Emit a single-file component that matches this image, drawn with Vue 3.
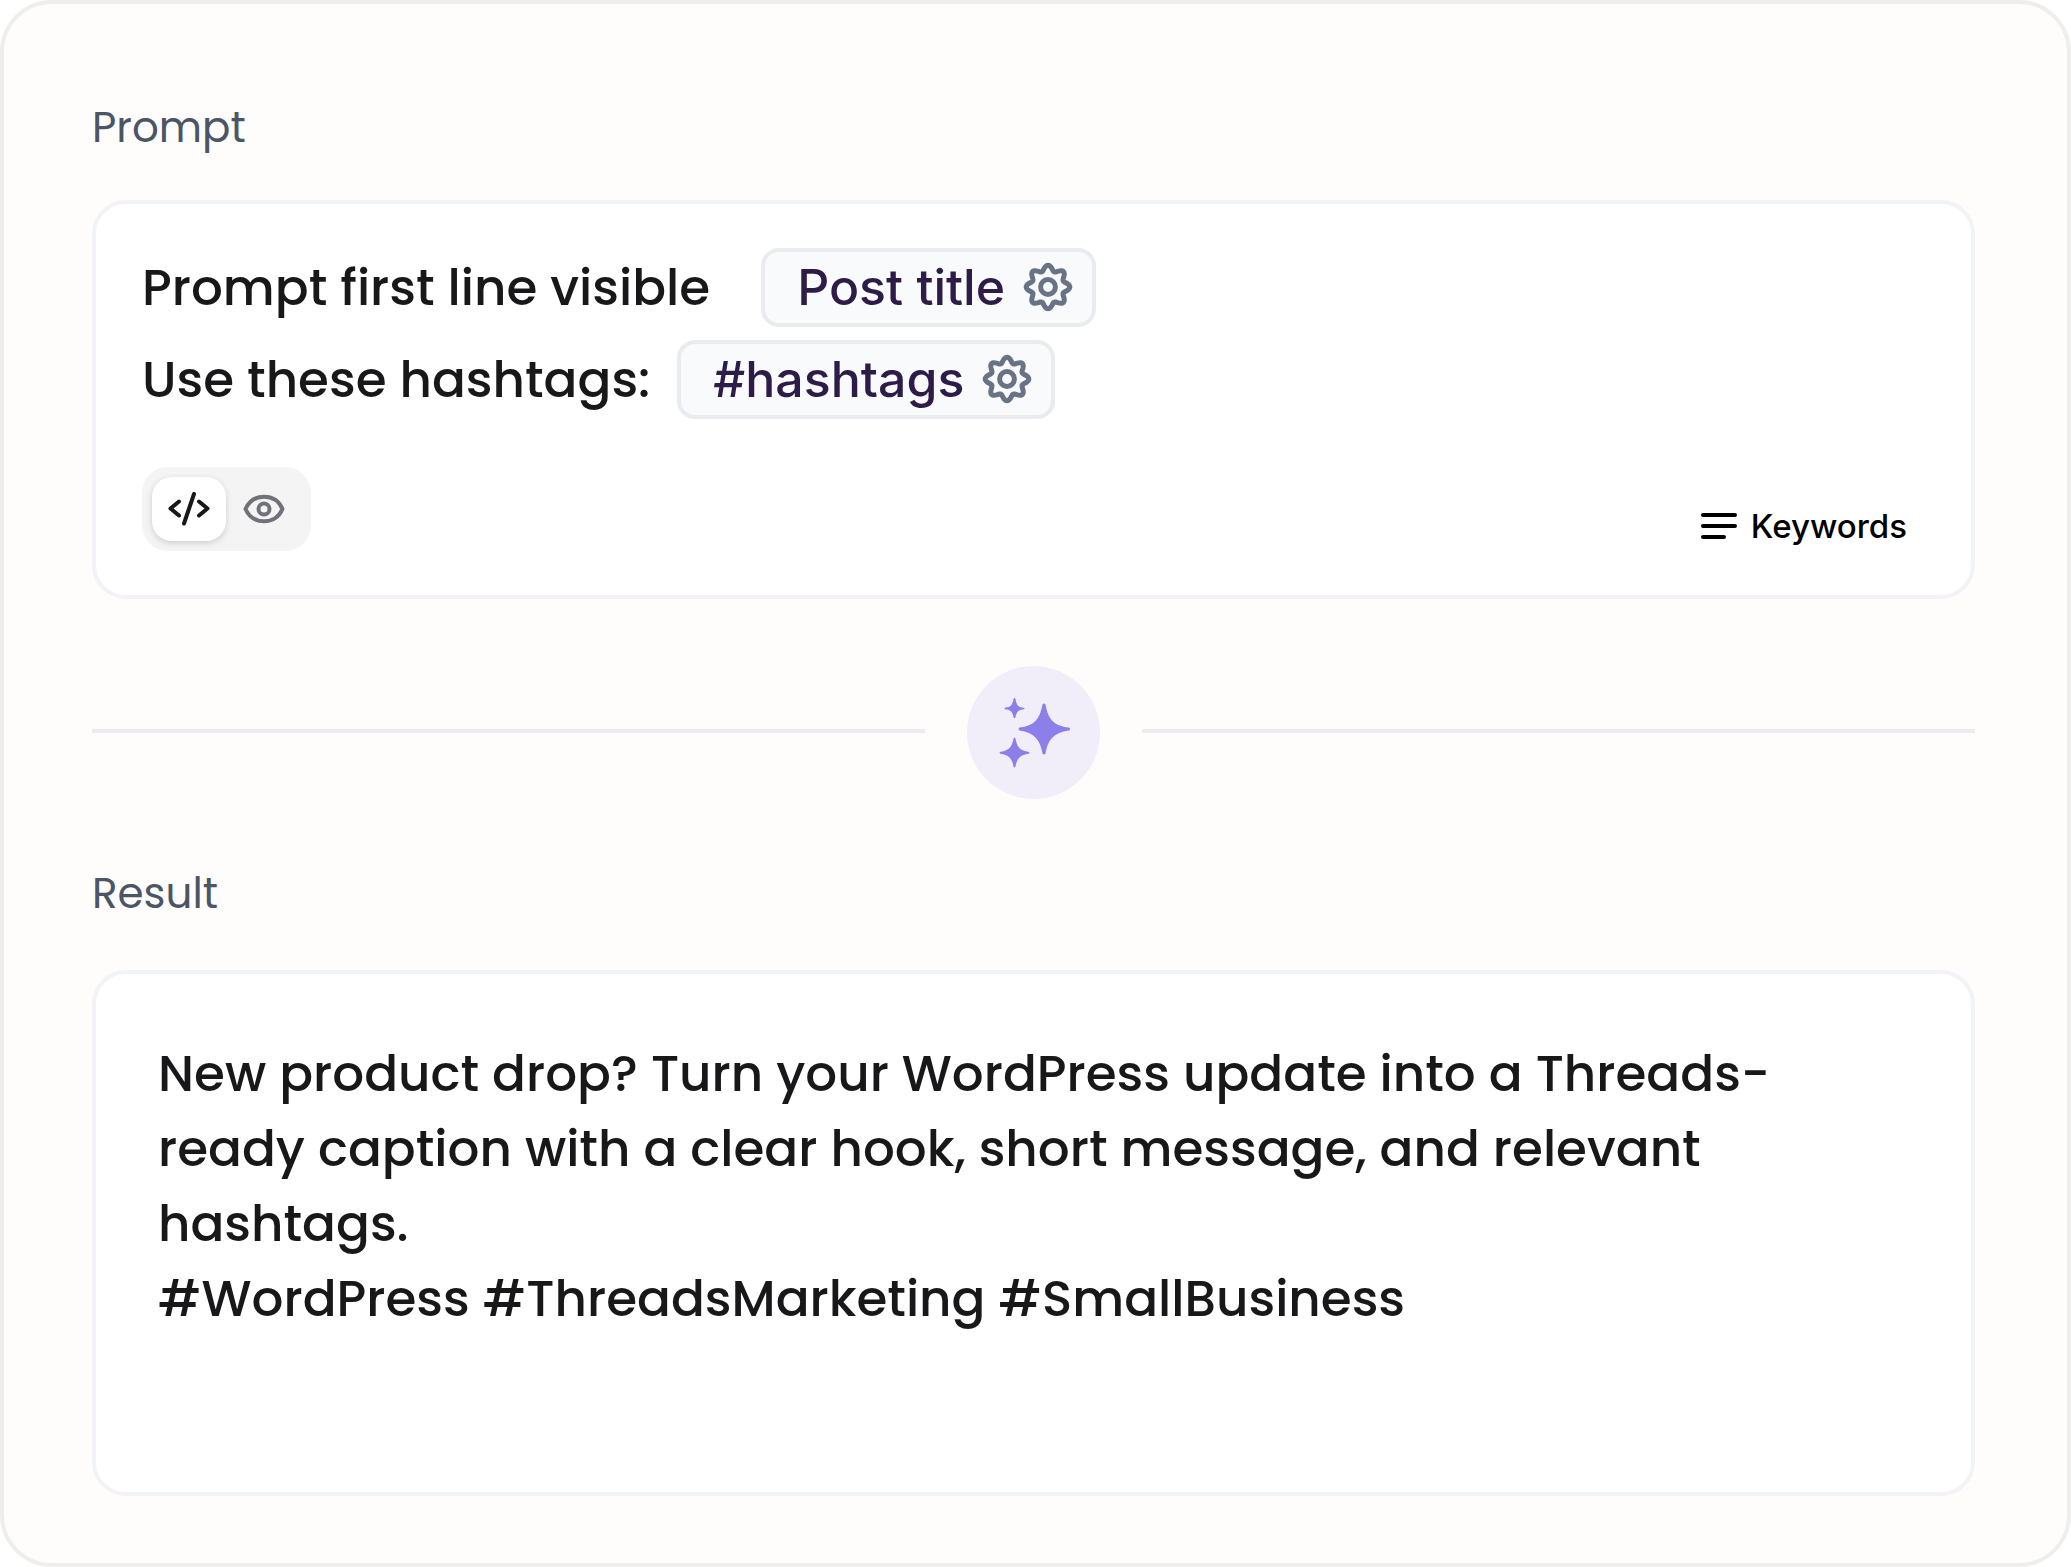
<script setup>
import { ref } from 'vue'

const mode = ref('code')

const rows = [
  { text: 'Prompt first line visible', chip: 'Post title', wide: true },
  { text: 'Use these hashtags:', chip: '#hashtags', wide: false },
]

const resultText =
  'New product drop? Turn your WordPress update into a Threads-ready caption with a clear hook, short message, and relevant hashtags.'
const resultTags = '#WordPress #ThreadsMarketing #SmallBusiness'

// Eight-lobed gear outline in a 50 x 50 box
const gearPath = (() => {
  const steps = 160
  const points = []
  for (let i = 0; i < steps; i++) {
    const a = (i / steps) * Math.PI * 2
    const r = 19.1 + 2.7 * Math.cos(8 * a)
    points.push(`${(25 + r * Math.cos(a)).toFixed(2)} ${(25 + r * Math.sin(a)).toFixed(2)}`)
  }
  return `M${points.join('L')}Z`
})()
</script>

<template>
  <main class="panel">
    <section class="block">
      <h2 class="label">Prompt</h2>
      <div class="card prompt">
        <div class="rows">
          <div v-for="row in rows" :key="row.chip" class="row" :class="{ wide: row.wide }">
            <span class="text">{{ row.text }}</span>
            <button type="button" class="chip">
              {{ row.chip }}
              <svg class="gear" viewBox="0 0 50 50" aria-hidden="true">
                <path :d="gearPath" />
                <circle cx="25" cy="25" r="7.4" />
              </svg>
            </button>
          </div>
        </div>
        <div class="tools">
          <div class="toggle">
            <button type="button" class="tab" :class="{ active: mode === 'code' }" aria-label="Code" @click="mode = 'code'">
              <svg viewBox="0 0 42 34" width="42" height="34" aria-hidden="true">
                <path d="M11 9.500L2.500 16.500L11 23.500M31 9.500L39.500 16.500L31 23.500M26 2L16 31.500" />
              </svg>
            </button>
            <button type="button" class="tab" :class="{ active: mode === 'preview' }" aria-label="Preview" @click="mode = 'preview'">
              <svg viewBox="0 0 42 34" width="42" height="34" aria-hidden="true">
                <path d="M2.500 17C6 9 13 4.800 21 4.800S36 9 39.500 17C36 25 29 29.200 21 29.200S6 25 2.500 17Z" />
                <circle cx="21" cy="17" r="5.500" />
              </svg>
            </button>
          </div>
          <button type="button" class="keywords">
            <svg viewBox="0 0 36 26" width="36" height="26" aria-hidden="true">
              <path d="M2 2H34M2 13H34M2 24H23" />
            </svg>
            Keywords
          </button>
        </div>
      </div>
    </section>

    <div class="divider">
      <span class="line"></span>
      <span class="badge">
        <svg viewBox="0 0 133 133" aria-hidden="true">
          <path d="M75.500 38.500Q77 36.500 78.500 38.500C81 53 87 60 102 61.500Q104.500 63 102 64.500C87 67 81 73 78.500 87.500Q77 89.500 75.500 87.500C73 73 67 67 52.500 64.500Q50.500 63 52.500 61.500C67 60 73 53 75.500 38.500Z" />
          <path d="M46.600 32.500Q47.500 31.500 48.400 32.500C49.500 39 51 41 57 41.700Q58 42.500 57 43.300C51 44 49.500 46 48.400 51.500Q47.500 53 46.600 51.500C45.500 46 44 44 38 43.300Q37 42.500 38 41.700C44 41 45.500 39 46.600 32.500Z" />
          <path d="M46.500 72.500Q47.500 70.500 48.500 72.500C50 81 53 84.500 61.500 85.700Q63.500 86.700 61.500 87.700C53 89 50 92.500 48.500 100.500Q47.500 102.500 46.500 100.500C45 92.500 42 89 33.500 87.700Q31.500 86.700 33.500 85.700C42 84.500 45 81 46.500 72.500Z" />
        </svg>
      </span>
      <span class="line"></span>
    </div>

    <section class="block grow">
      <h2 class="label result-label">Result</h2>
      <div class="card result">
        <p>{{ resultText }}</p>
        <p>{{ resultTags }}</p>
      </div>
    </section>
  </main>
</template>

<style>
body {
  margin: 0;
  background: #fff;
}
</style>

<style scoped>
.panel {
  box-sizing: border-box;
  display: flex;
  flex-direction: column;
  min-height: 100vh;
  padding: 95px 92px 67px 88px;
  border: 4px solid #efeeed;
  border-radius: 52px;
  background: #fefdfc;
  font-family: Poppins, Inter, sans-serif;
  color: #18181a;
}
.block {
  display: flex;
  flex-direction: column;
}
.grow {
  flex: 1;
}
.label {
  margin: 0 0 43px;
  font-size: 42px;
  line-height: 58px;
  font-weight: 400;
  color: #4b5565;
}
.result-label {
  margin-bottom: 47px;
}
.card {
  border: 4px solid #f1f3f7;
  border-radius: 34px;
  background: #fff;
}
.prompt {
  padding: 44px 46px;
}
.rows {
  display: flex;
  flex-direction: column;
  gap: 13px;
}
.row {
  display: flex;
  align-items: center;
  gap: 27px;
  font-size: 50px;
  line-height: 75px;
  font-weight: 500;
}
.row.wide {
  gap: 51px;
}
button {
  margin: 0;
  border: 0;
  background: none;
  font-family: Inter, sans-serif;
  cursor: pointer;
}
.chip {
  box-sizing: border-box;
  display: flex;
  align-items: center;
  gap: 18px;
  height: 79px;
  padding: 0 19px 2px 32px;
  border: 4px solid #e9ebef;
  border-radius: 18px;
  background: #f9fafc;
  font-size: 50px;
  font-weight: 500;
  font-optical-sizing: none;
  color: #2c1c47;
}
.gear {
  width: 50px;
  height: 50px;
  fill: none;
  stroke: #697386;
  stroke-width: 5;
}
.tools {
  display: flex;
  align-items: flex-end;
  justify-content: space-between;
  margin-top: 48px;
}
.toggle {
  display: flex;
  gap: 1px;
  padding: 10px;
  border-radius: 26px;
  background: #f4f4f4;
}
.tab {
  display: flex;
  align-items: center;
  justify-content: center;
  width: 74px;
  height: 64px;
  padding: 0;
  border-radius: 20px;
  color: #71717a;
}
.tab.active {
  background: #fff;
  box-shadow: 0 2px 6px rgba(0, 0, 0, 0.16);
  color: #18181a;
}
.tab svg,
.keywords svg {
  fill: none;
  stroke: currentColor;
  stroke-width: 4;
  stroke-linecap: round;
  stroke-linejoin: round;
}
.keywords {
  display: flex;
  align-items: center;
  gap: 14px;
  height: 50px;
  padding: 0 18px;
  font-size: 33px;
  font-weight: 500;
  color: #000;
}
.divider {
  display: flex;
  align-items: center;
  gap: 42px;
  margin: 67px 0 66px;
}
.line {
  flex: 1;
  height: 4px;
  margin-bottom: 4px;
  background: #ebecef;
}
.badge {
  width: 133px;
  height: 133px;
  border-radius: 50%;
  background: #f2eef9;
}
.badge svg {
  display: block;
  fill: #8d7fe9;
}
.result {
  flex: 1;
  padding: 62px;
}
.result p {
  margin: 0;
  font-size: 50px;
  line-height: 75px;
  font-weight: 500;
}
</style>
